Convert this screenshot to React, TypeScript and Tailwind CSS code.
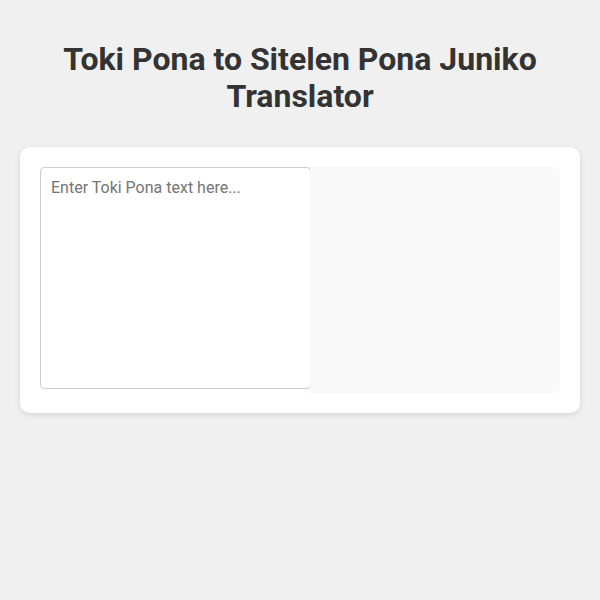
import React, { useState } from 'react';

const App: React.FC = () => {
  const [text, setText] = useState('');

  return (
    <div className="min-h-screen bg-[#f0f0f0] p-5 font-['Roboto',sans-serif] text-[#333]">
      <h1 className="mt-[21px] mb-[32px] text-center text-[32px] font-bold leading-[37px] text-[#333]">
        Toki Pona to Sitelen Pona Juniko Translator
      </h1>

      <div className="rounded-[10px] bg-white p-5 shadow-[0_2px_6px_rgba(0,0,0,0.1)]">
        <div className="flex items-start">
          <textarea
            value={text}
            onChange={(e) => setText(e.target.value)}
            placeholder="Enter Toki Pona text here..."
            className="h-[222px] w-[271px] resize-none rounded border border-[#ccc] bg-white p-[10px] text-base leading-[19px] text-[#333] placeholder:text-[#757575] focus:outline-none"
          />
          <div className="-ml-px h-[226px] flex-1 rounded-r bg-[#f9f9f9]" />
        </div>
      </div>
    </div>
  );
};

export default App;
